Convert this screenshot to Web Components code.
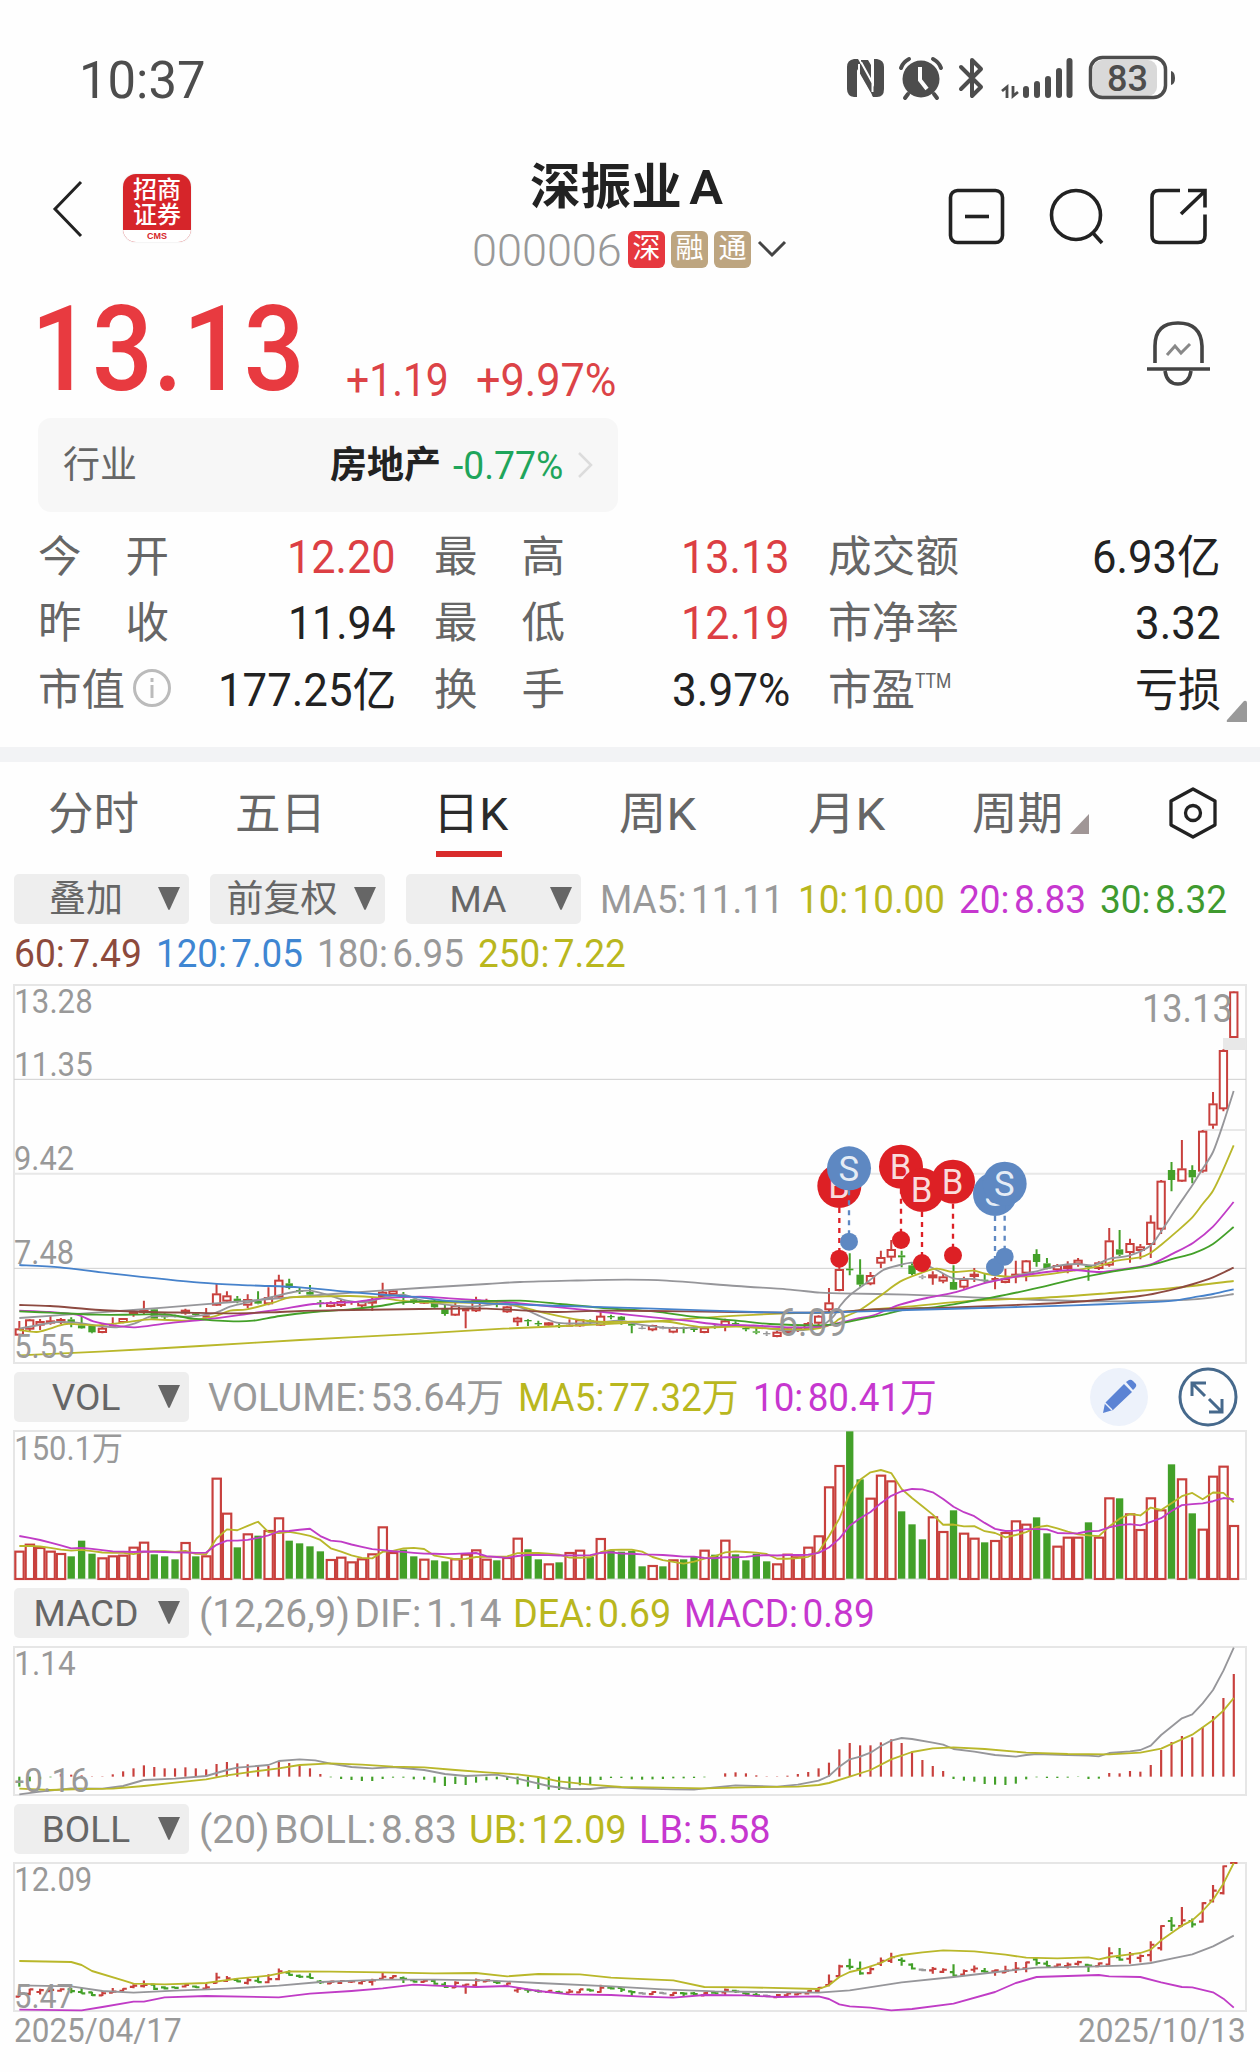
<!DOCTYPE html>
<html lang="zh-CN">
<head>
<meta charset="UTF-8">
<title>深振业A</title>
<style>
  body {
    margin: 0;
    width: 1260px;
    height: 2072px;
    overflow: hidden;
    background: #fefefe;
    color: #222;
    font-family: Roboto, "Noto Sans CJK SC", sans-serif;
  }
</style>
</head>
<body>
<stock-page></stock-page>

<script>
// text stretched to a fixed width
class FitText extends HTMLElement {
  constructor() {
    super();
    this.attachShadow({ mode: 'open' });
    this.shadowRoot.innerHTML = `
      <style>
        :host { display: inline-block; white-space: nowrap; flex: none; }
        span { display: inline-block; transform-origin: 0 50%; }
      </style>
      <span><slot></slot></span>`;
  }

  connectedCallback() {
    const w = Number(this.getAttribute('w'));
    const span = this.shadowRoot.querySelector('span');
    this.style.width = w + 'px';
    span.style.transform = `scaleX(${w / span.offsetWidth})`;
  }
}

class StatusBar extends HTMLElement {
  constructor() {
    super();
    this.attachShadow({ mode: 'open' });
    this.shadowRoot.innerHTML = `
      <style>
        :host { display: flex; justify-content: space-between; align-items: center; height: 156px; padding: 0 83px 0 79px; color: #4d4d4d; }
        .time { font-size: 52px; line-height: 60px; padding-top: 5px; }
        svg { display: block; }
      </style>
      <fit-text class="time" w="127">10:37</fit-text>
      <svg width="332" height="48" viewBox="845 54 332 48" fill="#4d4d4d">
        <path d="M854 59h4l16 28V59h3q7 1 7 8v22q0 8-7 8h-4l-16-28v28h-3q-7-1-7-8V67q0-7 7-8z"/>
        <path d="M861 60h7l3 5v27h-1l-9-16z" fill="#4d4d4d"/>
        <path d="M859 64v32M872.500 60v32M861 62l11 20M859 74l12 21" fill="none" stroke="#fefefe" stroke-width="2"/>
        <circle cx="921" cy="79" r="18.5"/>
        <path d="M901 68q2-6 8-9M941 68q-2-6-8-9M908 94l-3 4M934 94l3 4" fill="none" stroke="#4d4d4d" stroke-width="4" stroke-linecap="round"/>
        <path d="M920 67v13l7 9" fill="none" stroke="#fefefe" stroke-width="4"/>
        <path d="M961 67l20 20-9 9V60l9 9-20 20" fill="none" stroke="#4d4d4d" stroke-width="4" stroke-linejoin="round" stroke-linecap="round"/>
        <path d="M1002 91l5-4v11M1018 92l-5 4V86" fill="none" stroke="#4d4d4d" stroke-width="2.8"/>
        <path d="M1026 89v6M1037 84v11M1048 79v16M1059 71v24M1069.500 61v34" stroke="#4d4d4d" stroke-width="6" stroke-linecap="round"/>
        <rect x="1093" y="60" width="64" height="36" rx="9" fill="#d9d9d9"/>
        <rect x="1090.500" y="57.500" width="75" height="40" rx="12" fill="none" stroke="#4d4d4d" stroke-width="3.500"/>
        <path d="M1171 71q4 1 4 7t-4 7z"/>
        <text x="1107" y="91" font-size="36" font-weight="500" textLength="41" lengthAdjust="spacingAndGlyphs">83</text>
      </svg>`;
  }
}

class StockHeader extends HTMLElement {
  constructor() {
    super();
    this.attachShadow({ mode: 'open' });
    this.shadowRoot.innerHTML = `
      <style>
        :host { display: grid; grid-template-columns: 472px 317px 1fr; height: 124px; }
        svg { display: block; }
        .left { display: flex; padding: 18px 0 0 52px; gap: 39px; }
        .logo { width: 68px; height: 68px; border-radius: 13px; overflow: hidden; background: #d6252a; color: #fff; font-weight: 500; box-shadow: 0 0 2px #ddd; }
        .logo div { font-size: 24px; line-height: 25px; text-align: center; }
        .logo div:first-child { padding-top: 4px; }
        .logo p { margin: 2px 0 0; height: 12px; background: #fff; color: #d6252a; font: 700 9px/12px "Liberation Sans", sans-serif; text-align: center; }
        .title { display: block; font-size: 49px; font-weight: 600; line-height: 60px; padding: 2px 0 0 58px; height: 58px; word-spacing: -5px; }
        .sub { display: flex; align-items: center; height: 58px; padding-top: 4px; color: #999; font-size: 45px; font-weight: 300; }
        .sub fit-text { padding-top: 3px; }
        .tag { width: 37px; height: 37px; line-height: 36px; margin-right: 6px; border-radius: 6px; background: #bda580; color: #fff; font-size: 28px; font-weight: 400; text-align: center; }
        .tag.red { background: #e6383f; margin-left: 6px; }
        .tools { padding: 30px 0 0 157px; }
      </style>
      <div class="left">
        <svg width="32" height="70" viewBox="52 174 32 70" fill="none" stroke="#222" stroke-width="3"><path d="M81 182L55 209L81 236"/></svg>
        <div class="logo"><div>招商</div><div>证券</div><p>CMS</p></div>
      </div>
      <div>
        <fit-text class="title" w="193">深振业 A</fit-text>
        <div class="sub">
          <fit-text w="150">000006</fit-text>
          <span class="tag red">深</span><span class="tag">融</span><span class="tag">通</span>
          <svg width="32" height="20" viewBox="0 0 32 20" fill="none" stroke="#444" stroke-width="3"><path d="M2 3L15 16L28 3"/></svg>
        </div>
      </div>
      <div class="tools">
        <svg width="266" height="62" viewBox="946 186 266 62" fill="none" stroke="#222" stroke-width="3.6">
          <rect x="950.500" y="190.500" width="52" height="52" rx="7"/>
          <path d="M965 216.500h24"/>
          <circle cx="1076" cy="215" r="24.500"/>
          <path d="M1093 233l9 10"/>
          <path d="M1180 190.500h-21q-7 0-7 7v38q0 7 7 7h39q7 0 7-7v-21M1181 214l24-23M1188 190.500h17v17"/>
        </svg>
      </div>`;
  }
}

class PriceQuote extends HTMLElement {
  constructor() {
    super();
    this.attachShadow({ mode: 'open' });
    this.shadowRoot.innerHTML = `
      <style>
        :host { display: flex; height: 138px; padding-left: 31px; color: #e83a40; }
        .last { font-size: 119px; line-height: 140px; font-weight: 500; }
        .chg { font-size: 46px; line-height: 54px; margin-top: 73px; margin-left: 41px; color: #dc4347; }
        .chg + .chg { margin-left: 27px; }
        svg { margin: 38px 46px 0 auto; }
      </style>
      <fit-text class="last" w="274">13.13</fit-text>
      <fit-text class="chg" w="103">+1.19</fit-text>
      <fit-text class="chg" w="140">+9.97%</fit-text>
      <svg width="68" height="70" viewBox="1146 318 68 70" fill="none" stroke="#444" stroke-width="3.600">
        <path d="M1155 363v-17q0-23 23-23t24 23v17M1147 369h63M1165 371q2 13 13 13t13-13"/>
        <path d="M1167 355l8-9 6 7 9-9" stroke="#888" stroke-width="3"/>
      </svg>`;
  }
}

class IndustryCard extends HTMLElement {
  constructor() {
    super();
    this.attachShadow({ mode: 'open' });
    this.shadowRoot.innerHTML = `
      <style>
        :host { display: flex; align-items: center; box-sizing: border-box; width: 580px; height: 94px; margin-left: 38px; padding: 0 25px 0 25px; border-radius: 13px; background: #f7f7f7; font-size: 37px; line-height: 50px; }
        .name { color: #666; margin-right: auto; padding-top: 2px; }
        .sector { font-weight: 700; margin-right: 12px; padding-top: 2px; }
        .pct { color: #1fa55b; font-size: 39px; margin-right: 14px; padding-top: 1px; }
      </style>
      <span class="name">行业</span>
      <span class="sector">房地产</span>
      <fit-text class="pct" w="110">-0.77%</fit-text>
      <svg width="16" height="28" viewBox="0 0 16 28" fill="none" stroke="#dcdcdc" stroke-width="2.500"><path d="M2 2L14 14L2 26"/></svg>`;
  }
}

class QuoteGrid extends HTMLElement {
  constructor() {
    super();
    this.attachShadow({ mode: 'open' });
    const datas = [
      ['今 开', '12.20', 109, 'up'], ['最 高', '13.13', 109, 'up'], ['成交额', '6.93亿', 129, ''],
      ['昨 收', '11.94', 108, ''], ['最 低', '12.19', 109, 'up'], ['市净率', '3.32', 86, ''],
      ['市值', '177.25亿', 178, ''], ['换 手', '3.97%', 118, ''], ['市盈', '亏损', 86, '']
    ];
    const info = '<svg width="40" height="40" viewBox="0 0 40 40" fill="none" stroke="#bbb" stroke-width="3"><circle cx="20" cy="20" r="17.500"/><path d="M20 17v13M20 10v4"/></svg>';
    this.shadowRoot.innerHTML = `
      <style>
        :host { display: block; position: relative; padding: 12px 0 24px 38px; }
        .grid { display: grid; grid-template-columns: 358px 356px 393px; column-gap: 38px; grid-auto-rows: 66.300px; }
        .cell { display: flex; justify-content: space-between; align-items: center; font-size: 46px; line-height: 66px; }
        .label { display: flex; align-items: center; width: 131px; font-size: 43.500px; color: #666; white-space: nowrap; }
        .label b { flex: 1; font-weight: 400; text-align-last: justify; padding-top: 2px; }
        .label b.short { flex: none; }
        .label svg { margin: -3px 0 0 7px; flex: none; }
        sup { font-size: 20px; line-height: 20px; align-self: flex-start; margin-top: 15px; }
        .up { color: #dc3f44; }
        .corner { position: absolute; right: 13px; bottom: 25px; }
      </style>
      <div class="grid">
        ${datas.map(d => `
          <div class="cell">
            <span class="label"><b class="${d[0].length === 2 ? 'short' : ''}">${d[0]}</b>${d[0] === '市值' ? info : ''}${d[0] === '市盈' ? '<sup><fit-text w="36">TTM</fit-text></sup>' : ''}</span>
            <fit-text class="${d[3]}" w="${d[2]}">${d[1]}</fit-text>
          </div>`).join('')}
      </div>
      <svg class="corner" width="21" height="22" viewBox="0 0 21 22"><path d="M18 1Q21 0 21 3V22H2Q0 22 1 20z" fill="#999"/></svg>`;
  }
}

class PeriodTabs extends HTMLElement {
  constructor() {
    super();
    this.attachShadow({ mode: 'open' });
    // label, left edge gap, width
    const tabs = [['分时', 48, 91], ['五日', 96, 91], ['日K', 107, 75], ['周K', 111, 77], ['月K', 112, 77], ['周期', 87, 91]];
    this.shadowRoot.innerHTML = `
      <style>
        :host { display: flex; height: 112px; border-top: 15px solid #f2f3f5; color: #666; font-size: 45px; line-height: 106px; }
        .tab { position: relative; height: 100px; }
        .on { color: #2b2b2b; }
        .on::after { content: ""; position: absolute; left: 3px; bottom: 5px; width: 66px; height: 6px; background: #d92c2b; }
        .more { margin: 52px 0 0 7px; }
        .gear { margin: 24px 0 0 79px; }
      </style>
      ${tabs.map(t => `<div class="tab ${t[0] === '日K' ? 'on' : ''}" style="margin-left:${t[1]}px"><fit-text w="${t[2]}">${t[0]}</fit-text></div>`).join('')}
      <svg class="more" width="19" height="20"><path d="M19 0V20H0z" fill="#a09696"/></svg>
      <svg class="gear" width="50" height="54" viewBox="1169 786 50 54" fill="none" stroke="#222" stroke-width="3.300">
        <path d="M1194 789l22 12v24l-22 12-22-12v-24z" stroke-linejoin="round"/><circle cx="1194" cy="813" r="7.500"/>
      </svg>`;
  }
}

class PickChip extends HTMLElement {
  constructor() {
    super();
    this.attachShadow({ mode: 'open' });
    this.shadowRoot.innerHTML = `
      <style>
        :host { display: flex; align-items: center; box-sizing: border-box; width: 175px; height: 50px; padding-right: 9px; border-radius: 5px; background: #eee; color: #666; font-size: 37px; line-height: 50px; flex: none; }
        div { flex: 1; text-align: center; padding-top: 3px; }
      </style>
      <div><slot></slot></div>
      <svg width="22" height="23"><path d="M0 0H22L12 22Q11 24 10 22z" fill="#666"/></svg>`;
  }
}

class IndicatorRow extends HTMLElement {
  constructor() {
    super();
    this.attachShadow({ mode: 'open' });
    this.shadowRoot.innerHTML = `
      <style>
        :host { display: flex; align-items: center; height: 50px; padding: 0 14px; font-size: 39px; line-height: 50px; word-spacing: -5px; color: #999; }
      </style>
      <slot></slot>`;
  }
}

// every chart uses the same x scale, 3 units per pixel
const barX = i => 58 + 31.14 * i;
const RED = '#c8403d', GREEN = '#43a029', GRAY = '#96969a', YELLOW = '#b9b72a', PURPLE = '#c03cc6';

// color, high, body top, body bottom, low
const candles = `r1023,1046,1066,1066 r1017,1019,1048,1055 r1017,1024,1036,1050 r1008,1022,1030,1034 r1014,1018,1028,1032
g1012,1018,1030,1042 g1010,1036,1045,1046 g1036,1038,1057,1060 r1030,1044,1058,1060 r1012,1034,1040,1040
r1014,1015,1028,1030 r988,994,1002,1010 r962,990,998,1004 g984,988,1016,1020 g1000,1006,1012,1018
g1004,1005,1009,1012 r986,990,1000,1004 g996,1000,1005,1008 r984,1006,1013,1014 r912,941,976,978
r934,947,964,968 g948,956,966,970 r943,958,976,984 g934,962,971,973 r922,952,972,976
r884,900,952,956 g896,910,924,928 g924,930,936,942 g915,936,944,946 g960,967,972,982
r964,968,980,982 r960,964,977,981 r964,967,969,974 r962,964,978,984 r952,960,970,992
r908,936,950,952 r928,932,944,946 g936,945,950,974 g956,958,968,972 r960,962,970,972
g960,964,982,986 g972,987,1002,1007 r968,976,1006,1008 r984,987,994,1045 r950,960,993,996
r956,960,966,968 g964,970,974,982 r978,980,996,998 r1010,1014,1026,1038 g1018,1020,1024,1038
g1022,1029,1033,1038 r1026,1028,1036,1038 g1030,1036,1040,1044 r1018,1034,1040,1040 r1018,1019,1038,1040
g1018,1021,1026,1032 r990,1008,1036,1038 g1004,1008,1012,1018 g1008,1010,1020,1034 g1030,1032,1037,1060
x1038,1043,1047,1048 r1034,1036,1050,1054 x1038,1042,1046,1048 r1040,1042,1057,1060 g1040,1043,1047,1060
g1038,1045,1050,1056 r1040,1043,1058,1060 g1036,1040,1044,1046 r1016,1022,1038,1054 g1024,1029,1033,1040
g1042,1044,1048,1054 g1044,1054,1058,1063 x1054,1059,1063,1068 r1052,1056,1070,1072 r1042,1046,1058,1060
r1040,1044,1052,1056 r1026,1030,1046,1050 r1006,1008,1030,1036 r924,968,990,996 r860,868,932,934
g820,866,871,886 g838,884,914,920 r876,886,912,916 r812,832,850,864 r780,808,832,844
g812,826,832,862 g850,856,882,886 x884,889,893,898 r874,884,894,914 r882,890,904,910
g856,906,929,930 r890,898,922,926 r864,882,890,906 g880,899,903,908 r890,894,900,928
r866,896,908,910 r842,882,890,910 r840,842,880,904 g808,822,846,860 g834,850,866,868
r852,856,870,876 r844,856,866,880 r834,840,852,860 g856,858,862,902 r844,848,866,870
r744,782,856,860 g750,808,824,828 r776,790,818,848 r792,800,812,838 r706,726,794,834
r600,603,748,762 g546,570,600,634 r480,566,604,606 g556,570,592,610 r450,453,574,578
r336,371,436,446 r208,211,387,394 r34,35,173,174`.split(/\s+/).map(s => ({ c: s[0], v: s.slice(1).split(',').map(Number) }));

const volumes = [573, 552, 562, 573, 580, 588, 541, 580, 593, 587, 585, 561, 546, 582, 588, 597, 547, 588, 587, 354,
  459, 561, 521, 526, 511, 473, 541, 549, 558, 573, 598, 591, 605, 596, 581, 500, 577, 568, 588, 597,
  600, 603, 596, 582, 569, 597, 600, 592, 534, 567, 597, 611, 606, 577, 570, 590, 535, 570, 574, 572,
  618, 616, 618, 599, 597, 590, 570, 583, 540, 582, 600, 580, 603, 611, 582, 590, 561, 527, 380, 316,
  213, 357, 414, 345, 362, 453, 492, 537, 470, 514, 450, 519, 534, 546, 541, 517, 482, 492, 471, 519,
  558, 531, 531, 486, 531, 413, 414, 461, 508, 413, 449, 312, 356, 459, 507, 348, 318, 496];

const hist = [620, 604, 598, 592, 582, 584, 586, 589, 589, 583, 574, 565, 556, 561, 565, 565, 562, 565, 568, 552,
  546, 550, 553, 558, 558, 546, 549, 556, 565, 582, 592, 597, 600, 603, 603, 597, 593, 593, 598, 599,
  608, 618, 612, 615, 608, 601, 598, 600, 613, 620, 627, 629, 630, 625, 616, 612, 600, 594, 594, 598,
  599, 598, 597, 595, 595, 594, 592, 590, 580, 577, 580, 586, 589, 589, 587, 582, 576, 565, 548, 508,
  489, 496, 496, 487, 478, 489, 514, 540, 558, 573, 597, 602, 605, 612, 614, 615, 611, 598, 592, 594,
  594, 593, 591, 597, 596, 579, 580, 573, 575, 555, 510, 486, 468, 472, 441, 408, 354, 282];

const line = (points, color) => `<polyline points="${points}" fill="none" stroke="${color}" stroke-width="5.5" stroke-linejoin="round"/>`;
const byBar = (s, color) => line(s.split(' ').map(p => { const [i, y] = p.split(','); return `${barX(Number(i))},${y}`; }).join(' '), color);

// monotone smoothing for the averages of the price chart
const curve = (s, color) => {
  const p = s.split(' ').map(a => a.split(',').map(Number));
  let d = `M${p[0]}`;
  for (let i = 0; i < p.length - 1; i++) {
    const a = p[i - 1] || p[i], b = p[i], c = p[i + 1], e = p[i + 2] || c;
    d += `C${b[0] + (c[0] - a[0]) / 7},${b[1] + (c[1] - a[1]) / 7} ${c[0] - (e[0] - b[0]) / 7},${c[1] - (e[1] - b[1]) / 7} ${c}`;
  }
  return `<path d="${d}" fill="none" stroke="${color}" stroke-width="5.5"/>`;
};

const label = (x, y, w, text, size = 99) => `<text x="${x}" y="${y}" font-size="${size}" fill="#999" textLength="${w}" lengthAdjust="spacingAndGlyphs">${text}</text>`;

function drawPrice() {
  let s = '';
  s += '<path d="M42 298H3738M42 865H3738" stroke="#cfcfcf" stroke-width="3"/><path d="M42 581H3738M3608 450H3738" stroke="#e8e8e8" stroke-width="6"/>';
  s += '<rect x="3669" y="174" width="69" height="36" fill="#e8e8e8"/>';
  candles.forEach((k, i) => {
    const [h, t, b, l] = k.v, x = barX(i);
    const color = k.c === 'r' ? RED : k.c === 'g' ? GREEN : '#999';
    s += `<path d="M${x} ${h}V${t}M${x} ${b}V${l}" stroke="${color}" stroke-width="6"/>`;
    if (k.c === 'r' && b - t > 7)
      s += `<rect x="${x - 11}" y="${t + 2}" width="22" height="${b - t - 4}" fill="#fefefe" stroke="${color}" stroke-width="6"/>`;
    else
      s += `<rect x="${x - 11}" y="${t}" width="22" height="${b - t}" fill="${color}"/>`;
  });
  s += curve('58,1014 200,1004 400,990 600,974 800,958 1000,942 1260,924 1460,912 1560,906 1710,902 1880,899 2000,902 2210,918 2360,928 2460,938 2520,940 2720,944 2920,952 3120,960 3320,964 3470,962 3580,958 3639,952 3701,942', GRAY);
  s += curve('58,1126 300,1115 600,1098 900,1080 1260,1061 1510,1046 1860,1030 2160,1010 2360,1000 2520,996 2720,980 2920,962 3120,954 3320,940 3520,924 3701,903', YELLOW);
  s += curve('58,1046 100,1038 170,1026 230,1028 300,1038 350,1042 405,1030 450,1010 500,1008 560,1010 640,1000 690,980 740,968 820,950 880,936 930,932 980,944 1040,962 1100,966 1160,950 1210,944 1260,960 1310,970 1410,980 1490,972 1550,978 1610,1004 1670,1028 1730,1030 1790,1028 1860,1022 1920,1034 2010,1044 2110,1042 2210,1036 2270,1040 2340,1050 2410,1050 2460,1040 2500,1010 2520,978 2550,945 2600,908 2650,870 2700,855 2735,848 2770,852 2810,870 2860,895 2920,897 2970,904 3020,893 3100,876 3170,858 3230,852 3280,856 3330,836 3390,826 3450,798 3483,755 3530,684 3577,616 3608,566 3639,516 3670,430 3701,333', GRAY);
  s += curve('58,1050 110,1056 150,1046 200,1032 290,1036 370,1028 450,1018 560,1022 640,1010 690,992 740,988 820,968 870,952 950,950 1050,948 1130,952 1200,962 1260,966 1380,968 1510,970 1570,982 1640,1000 1740,1020 1820,1026 1940,1024 2010,1026 2110,1042 2210,1040 2310,1046 2410,1048 2460,1044 2500,1030 2520,1016 2580,990 2640,948 2700,905 2760,880 2810,866 2860,876 2920,872 2960,882 3030,890 3120,886 3220,872 3290,860 3350,842 3420,832 3450,820 3483,795 3530,755 3577,712 3608,672 3639,632 3670,568 3701,496', YELLOW);
  s += curve('58,992 150,996 230,1004 280,1024 340,1036 405,1042 500,1030 620,1018 740,1002 840,988 940,972 1060,966 1140,956 1260,950 1360,956 1460,962 1560,970 1680,982 1810,996 1960,1012 2060,1022 2160,1034 2260,1036 2360,1042 2460,1040 2520,1028 2570,1016 2620,1006 2700,974 2780,954 2860,938 2960,908 3060,888 3140,876 3220,870 3300,876 3380,866 3450,854 3520,820 3580,788 3639,740 3701,666', PURPLE);
  s += curve('58,994 150,998 290,1004 400,1004 500,1003 580,1016 700,1024 760,1022 840,1008 940,996 1050,988 1140,978 1200,968 1260,964 1410,964 1560,962 1680,972 1810,984 1960,994 2080,1010 2210,1022 2310,1032 2460,1036 2520,1030 2580,1018 2640,1006 2720,988 2800,982 2900,966 3020,944 3120,922 3220,898 3320,878 3450,856 3520,836 3580,820 3639,792 3701,741', GREEN);
  s += curve('58,975 150,978 300,990 450,996 560,998 700,1000 840,996 950,992 1260,987 1460,986 1660,996 1810,992 2060,994 2360,998 2520,996 2620,988 2820,984 3070,974 3220,966 3420,948 3520,928 3580,912 3639,892 3701,863', '#8d4a41');
  s += curve('58,855 180,862 330,880 600,908 750,916 900,922 1050,936 1200,948 1260,952 1360,964 1560,974 1760,980 1960,986 2260,996 2460,998 2720,990 3020,982 3220,976 3420,968 3520,962 3580,952 3639,942 3701,928', '#4682cb');

  s += label(43, 99, 235, '13.28') + label(43, 289, 235, '11.35') + label(42, 571, 180, '9.42') + label(42, 852, 180, '7.48') + label(43, 1134, 180, '5.55');
  s += label(3426, 127, 272, '13.13', 118) + label(2334, 1068, 208, '6.09', 117);

  // trade markers: letter, x, bubble y, dot y
  [['B', 2518, 618, 836], ['S', 2547, 565, 785], ['B', 2703, 560, 780], ['B', 2859, 605, 826], ['B', 2766, 630, 849], ['S', 2985, 642, 861], ['S', 3014, 611, 830]].forEach(([t, x, y, dot]) => {
    const color = t === 'B' ? '#dd2025' : '#5e88c2';
    s += `<path d="M${x} ${y + 66}V${dot}" stroke="${color}" stroke-width="7" stroke-dasharray="15 15"/>
      <circle cx="${x}" cy="${dot}" r="27" fill="${color}"/><circle cx="${x}" cy="${y}" r="66" fill="${color}"/>
      <text x="${x - 1}" y="${y + 37}" font-size="104" fill="#fff" fill-opacity=".85" text-anchor="middle">${t}</text>`;
  });
  return s;
}

function drawVolume() {
  let s = '';
  volumes.forEach((y, i) => {
    const x = barX(i);
    if (candles[i].c === 'r')
      s += `<rect x="${x - 12}" y="${y + 1}" width="25" height="${655 - y}" fill="#fefefe" stroke="${RED}" stroke-width="6.5"/>`;
    else
      s += `<rect x="${x - 11}" y="${y}" width="22" height="${655 - y}" fill="${GREEN}"/>`;
  });
  const all = [497, 497, 497, 497, 497, 553, 553, 553, 553].concat(volumes);
  const mean = n => volumes.map((v, i) => {
    const part = all.slice(i + 10 - n, i + 10);
    return `${barX(i)},${part.reduce((a, b) => a + b) / n}`;
  }).join(' ');
  return s + line(mean(5), YELLOW) + line(mean(10), PURPLE) + label(43, 298, 326, '150.1万');
}

function drawMacd() {
  let s = '';
  hist.forEach((y, i) => {
    s += `<path d="M${barX(i)} 590V${y}" stroke="${y < 590 ? RED : GREEN}" stroke-width="6.5"/>`;
  });
  s += byBar('0,643 2,635 5,625 8,626 10,618 12,600 15,596 18,588 20,570 21,563 24,555 25,543 27,538 28.5,541 30,551 32,561 34,565 36,561 39,570 41,582 43,588 46,584 48,596 51,618 53,627 55,627 57,621 60,626 63,628 65,629 67,622 69,616 73,620 75,614 77,602 78,588 79,560 80,538 81,530 82,518 83,498 84,482 85,474 86,477 88,488 89,494 90,507 92,515 94,525 96,530 97,525 98,522 101,525 103,527 104,529 105,519 107,514 108,510 109,497 110,465 112,415 113,403 114,370 115,330 116,272 117,203', GRAY);
  s += byBar('0,626 3,630 6,627 9,626 12,618 15,608 18,598 20,586 22,577 25,565 27,555 30,550 33,554 36,560 39,562 42,570 45,577 48,583 50,591 52,604 55,614 58,621 62,623 66,625 70,622 75,620 77,615 78,609 80,590 82,570 84,538 86,516 88,505 90,502 93,507 97,518 101,522 105,523 108,518 110,506 113,464 115,420 116,392 117,354', YELLOW);
  return s + label(43, 286, 184, '1.14') + label(44, 636, 224, '-0.16');
}

function drawBoll() {
  // price chart scale to band scale
  const conv = z => Math.max(188, 188 + (12.09 - (13.28 - (z - 15) / 1134 * 7.73)) / 6.62 * 444);
  let s = '';
  candles.forEach((k, i) => {
    const [h, t, b, l] = k.v.map(conv), x = barX(i);
    const color = k.c === 'r' ? RED : k.c === 'g' ? GREEN : '#999';
    const open = k.c === 'r' ? b : t, close = k.c === 'r' ? t : b;
    s += `<path d="M${x} ${h - 1}V${l + 1}M${x - 11} ${open}H${x}M${x} ${close}H${x + 11}" stroke="${color}" stroke-width="6.5"/>`;
  });
  s += byBar('0,482 5,485 6,494 7,512 10,540 11,550 14,552 18,548 21,535 24,526 26,513 30,514 35,516 40,519 44,518 47,528 50,521 54,522 57,532 59,535 63,540 66,560 70,561 77,566 78,555 79,530 80,515 81,508 82,498 83,488 84,472 85,464 87,456 89,450 92,453 95,463 97,472 100,474 103,471 104,477 105,470 107,462 108,458 109,448 110,420 112,376 113,360 114,332 115,298 116,250 117,188', YELLOW);
  s += byBar('0,555 5,558 8,572 11,577 15,571 20,565 25,556 29,545 35,538 40,538 45,540 50,548 57,558 62,567 67,573 72,575 77,577 80,570 85,546 90,530 95,512 98,502 103,499 107,495 109,488 111,475 113,462 115,438 117,406', GRAY);
  s += byBar('0,628 6,630 8,620 11,604 12,604 14,591 18,587 25,591 28,580 32,572 35,564 38,553 40,556 44,560 47,557 50,572 53,582 57,584 60,589 63,592 66,584 70,585 73,590 77,588 78,596 79,612 80,618 82,622 84,630 86,626 90,610 94,575 96,548 98,530 101,527 104,524 105,528 108,530 110,546 112,560 113,561 115,576 116,595 117,622', PURPLE);
  return s + label(43, 273, 234, '12.09') + label(43, 624, 178, '5.47');
}

const charts = {
  price: { top: 15, height: 1134, draw: drawPrice },
  volume: { top: 212, height: 444, draw: drawVolume },
  macd: { top: 201, height: 444, draw: drawMacd },
  boll: { top: 188, height: 444, draw: drawBoll }
};

class ChartPanel extends HTMLElement {
  constructor() {
    super();
    this.attachShadow({ mode: 'open' });
  }

  connectedCallback() {
    const { top, height, draw } = charts[this.getAttribute('kind')];
    this.shadowRoot.innerHTML = `
      <style>
        :host { display: block; margin: 9px 14px; }
        svg { display: block; overflow: visible; }
      </style>
      <svg width="1232" height="${height / 3}" viewBox="42 ${top} 3696 ${height}">
        <rect x="42" y="${top}" width="3696" height="${height}" fill="none" stroke="#e6e6e6" stroke-width="6"/>
        ${draw()}
      </svg>`;
  }
}

class StockPage extends HTMLElement {
  constructor() {
    super();
    this.attachShadow({ mode: 'open' });
    this.shadowRoot.innerHTML = `
      <style>
        :host { display: block; }
        pick-chip + pick-chip { margin-left: 21px; }
        fit-text { margin-left: 14px; padding-top: 3px; }
        .first { margin-left: 19px; }
        .y { color: #b9b71e; }
        .p { color: #c637cf; }
        .g { color: #3f9a2f; }
        .br { color: #8d4a3c; }
        .bl { color: #3f86d2; }
        .second { height: 48px; margin-top: 5px; padding-left: 0; }
        .second + chart-panel { margin-top: 8px; }
        .round { margin-left: auto; margin-right: -1px; }
        .dates { display: flex; justify-content: space-between; padding: 0 14px; margin-top: -8px; font-size: 33px; line-height: 38px; color: #999; }
        .dates fit-text { margin: 0; padding: 0; }
      </style>
      <status-bar></status-bar>
      <stock-header></stock-header>
      <price-quote></price-quote>
      <industry-card></industry-card>
      <quote-grid></quote-grid>
      <period-tabs></period-tabs>
      <indicator-row>
        <pick-chip>叠加</pick-chip><pick-chip>前复权</pick-chip><pick-chip>MA</pick-chip>
        <fit-text class="first" w="184">MA5: 11.11</fit-text>
        <fit-text class="y" w="147">10: 10.00</fit-text>
        <fit-text class="p" w="127">20: 8.83</fit-text>
        <fit-text class="g" w="127">30: 8.32</fit-text>
      </indicator-row>
      <indicator-row class="second">
        <fit-text class="br" w="128">60: 7.49</fit-text>
        <fit-text class="bl" w="147">120: 7.05</fit-text>
        <fit-text w="147">180: 6.95</fit-text>
        <fit-text class="y" w="148">250: 7.22</fit-text>
      </indicator-row>
      <chart-panel kind="price"></chart-panel>
      <indicator-row>
        <pick-chip>VOL</pick-chip>
        <fit-text class="first" w="296">VOLUME: 53.64万</fit-text>
        <fit-text class="y" w="221">MA5: 77.32万</fit-text>
        <fit-text class="p" w="184">10: 80.41万</fit-text>
        <svg class="round" width="158" height="60" viewBox="1089 1367 158 60">
          <circle cx="1119" cy="1397" r="29" fill="#edf2fb"/>
          <path d="M1103 1413l2-10 19-19 8 8-19 18zM1126 1382l3-2q2-1 4 1l3 3q1 2-1 4l-2 2z" fill="#5b83d4"/>
          <path d="M1104 1402l8 8" stroke="#edf2fb" stroke-width="1.500"/>
          <g fill="none" stroke="#46698c" stroke-width="3"><circle cx="1208" cy="1397" r="28"/>
          <path d="M1192 1396v-13h14M1193 1384l12 12M1222 1399v13h-13M1221 1411l-12-12"/></g>
        </svg>
      </indicator-row>
      <chart-panel kind="volume"></chart-panel>
      <indicator-row>
        <pick-chip>MACD</pick-chip>
        <fit-text style="margin-left:10px" w="302">(12,26,9) DIF: 1.14</fit-text>
        <fit-text class="y" style="margin-left:12px" w="158">DEA: 0.69</fit-text>
        <fit-text class="p" style="margin-left:13px" w="191">MACD: 0.89</fit-text>
      </indicator-row>
      <chart-panel kind="macd"></chart-panel>
      <indicator-row>
        <pick-chip>BOLL</pick-chip>
        <fit-text style="margin-left:10px" w="258">(20) BOLL: 8.83</fit-text>
        <fit-text class="y" style="margin-left:12px" w="158">UB: 12.09</fit-text>
        <fit-text class="p" style="margin-left:12px" w="131">LB: 5.58</fit-text>
      </indicator-row>
      <chart-panel kind="boll"></chart-panel>
      <div class="dates"><fit-text w="168">2025/04/17</fit-text><fit-text w="168">2025/10/13</fit-text></div>`;
  }
}

window.customElements.define('fit-text', FitText);
window.customElements.define('status-bar', StatusBar);
window.customElements.define('stock-header', StockHeader);
window.customElements.define('price-quote', PriceQuote);
window.customElements.define('industry-card', IndustryCard);
window.customElements.define('quote-grid', QuoteGrid);
window.customElements.define('period-tabs', PeriodTabs);
window.customElements.define('pick-chip', PickChip);
window.customElements.define('indicator-row', IndicatorRow);
window.customElements.define('chart-panel', ChartPanel);
window.customElements.define('stock-page', StockPage);
</script>
</body>
</html>
